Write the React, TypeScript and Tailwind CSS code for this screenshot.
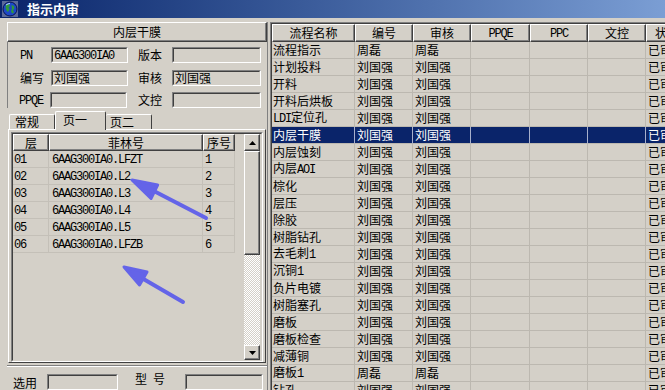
import React from "react";

const raised =
  "border border-t-white border-l-white border-r-[#404040] border-b-[#404040] shadow-[inset_-1px_-1px_0_#808080]";

function Txt({ s }: { s: string }) {
  const parts = s.match(/[\x20-\x7e]+|[^\x20-\x7e]+/g) || [];
  return (
    <span className="whitespace-pre">
      {parts.map((p, i) =>
        /^[\x20-\x7e]+$/.test(p) ? (
          <span key={i} className="font-['Liberation_Mono',monospace] text-[12px] tracking-[-1.2px]">
            {p}
          </span>
        ) : (
          <span key={i}>{p}</span>
        )
      )}
    </span>
  );
}

function Field({ w, value }: { w: string; value?: string }) {
  return (
    <div className={`${w} h-[16px] border border-t-[#808080] border-l-[#808080] border-r-white border-b-white`}>
      <div className="h-full border border-t-[#404040] border-l-[#404040] border-r-[#d4d0c8] border-b-[#d4d0c8] pl-[1px] flex items-center leading-[14px] whitespace-nowrap">
        {value && <Txt s={value} />}
      </div>
    </div>
  );
}

function Globe() {
  return (
    <svg width="16" height="16" viewBox="0 0 16 16">
      <rect x="0" y="0" width="16" height="16" fill="#5a6a9a" />
      <circle cx="8" cy="8" r="7" fill="#1d48c8" stroke="#0a1650" strokeWidth="1" />
      <path d="M4 3.5 L7 3 L8 5 L6.5 6.5 L7.5 8.5 L6 11 L4.5 9.5 L3.5 6.5 Z" fill="#2f9a3a" />
      <path d="M9.5 4 L12 5 L12.5 7.5 L11 9 L12 11.5 L10 12.5 L9 10 L10 8 Z" fill="#2f9a3a" />
      <path d="M4 4 Q6 2.5 8 2.5" stroke="#b8d4ff" strokeWidth="1" fill="none" />
    </svg>
  );
}

const leftRows = [
  ["01", "6AAG300IA0.LFZT", "1"],
  ["02", "6AAG300IA0.L2", "2"],
  ["03", "6AAG300IA0.L3", "3"],
  ["04", "6AAG300IA0.L4", "4"],
  ["05", "6AAG300IA0.L5", "5"],
  ["06", "6AAG300IA0.LFZB", "6"],
];

const steps = [
  "流程指示", "计划投料", "开料", "开料后烘板", "LDI定位孔", "内层干膜", "内层蚀刻",
  "内层AOI", "棕化", "层压", "除胶", "树脂钻孔", "去毛刺1", "沉铜1", "负片电镀",
  "树脂塞孔", "磨板", "磨板检查", "减薄铜", "磨板1", "钻孔",
];

const cols = [
  { t: "流程名称", w: "w-[83px]" },
  { t: "编号", w: "w-[58px]" },
  { t: "审核", w: "w-[58px]" },
  { t: "PPQE", w: "w-[59px]" },
  { t: "PPC", w: "w-[58px]" },
  { t: "文控", w: "w-[58px]" },
  { t: "状态", w: "w-[42px]" },
];

function LeftPanel() {
  return (
    <div className="w-[267px] pl-[7px] flex flex-col shrink-0">
      <div className={`h-[21px] ${raised} flex items-center justify-center`}>内层干膜</div>

      <div className="h-[71px] border-l border-l-[#808080] pl-[12px] pt-[5px] flex flex-col gap-[6px]">
        <div className="flex items-center h-[16px]">
          <span className="w-[31px]"><Txt s="PN" /></span>
          <Field w="w-[77px]" value="6AAG300IA0" />
          <span className="w-[34px] ml-[10px]">版本</span>
          <Field w="w-[89px]" />
        </div>
        <div className="flex items-center h-[16px] mt-[1px]">
          <span className="w-[31px]">编写</span>
          <Field w="w-[77px]" value="刘国强" />
          <span className="w-[34px] ml-[10px]">审核</span>
          <Field w="w-[89px]" value="刘国强" />
        </div>
        <div className="flex items-center h-[16px]">
          <span className="w-[31px] -ml-[1px]"><Txt s="PPQE" /></span>
          <Field w="w-[77px]" />
          <span className="w-[34px] ml-[11px]">文控</span>
          <Field w="w-[89px]" />
        </div>
      </div>

      <div className="relative z-10 h-[24px] -mb-[1px] flex items-end pl-[2px]">
        <div className="w-[46px] h-[15px] mb-[1px] border-t border-l border-r border-t-white border-l-white border-r-[#404040] rounded-t-[2px] pl-[5px] leading-[14px]">
          常规
        </div>
        <div className="w-[51px] h-[19px] bg-[#d4d0c8] border-t border-l border-r border-t-white border-l-white border-r-[#404040] rounded-t-[2px] pl-[7px] leading-[15px]">
          页一
        </div>
        <div className="w-[46px] h-[15px] mb-[1px] border-t border-r border-t-white border-r-[#404040] rounded-t-[2px] pl-[4px] leading-[14px]">
          页二
        </div>
      </div>

      <div className="h-[235px] ml-[1px] mr-[1px] border border-t-white border-l-white border-r-[#404040] border-b-[#404040] pt-[2px] pl-[2px] pr-[2px]">
        <div className="h-[230px] border border-t-[#808080] border-l-[#808080] border-r-white border-b-white">
          <div className="h-full border border-t-[#404040] border-l-[#404040] border-r-[#d4d0c8] border-b-[#d4d0c8] flex">
            <div className="w-[231px]">
              <div className="flex h-[17px]">
                <div className={`w-[36px] ${raised} flex items-center justify-center`}>层</div>
                <div className={`w-[154px] ${raised} flex items-center justify-center`}>菲林号</div>
                <div className={`w-[32px] ${raised} flex items-center justify-center`}>序号</div>
              </div>
              {leftRows.map((r) => (
                <div key={r[0]} className="flex h-[17px]">
                  <div className="w-[36px] border-r border-b border-[#c4c0b8] pl-[1px] flex items-center"><Txt s={r[0]} /></div>
                  <div className="w-[154px] border-r border-b border-[#c4c0b8] pl-[3px] flex items-center"><Txt s={r[1]} /></div>
                  <div className="w-[32px] border-r border-b border-[#c4c0b8] pl-[2px] flex items-center"><Txt s={r[2]} /></div>
                </div>
              ))}
            </div>
            <div className="w-[16px] flex flex-col">
              <div className={`h-[17px] ${raised} flex items-center justify-center`}>
                <svg width="7" height="4" viewBox="0 0 7 4"><path d="M3.5 0 L7 4 L0 4 Z" fill="#000" /></svg>
              </div>
              <div className={`h-[104px] ${raised}`} />
              <div className="flex-1 bg-[repeating-conic-gradient(#ffffff_0%_25%,#d4d0c8_0%_50%)] bg-size-[2px_2px]" />
              <div className={`h-[15px] ${raised} flex items-center justify-center`}>
                <svg width="7" height="4" viewBox="0 0 7 4"><path d="M0 0 L7 0 L3.5 4 Z" fill="#000" /></svg>
              </div>
            </div>
          </div>
        </div>
      </div>

      <div className="flex-1 mt-[2px] border-t border-t-[#808080] shadow-[inset_0_1px_0_#ffffff] flex items-start pt-[8px] pl-[6px]">
        <span className="w-[34px] mt-[2px]">选用</span>
        <Field w="w-[71px]" />
        <span className="w-[50px] ml-[17px] mt-[-2px]"><Txt s="型 号" /></span>
        <Field w="w-[78px]" />
      </div>
    </div>
  );
}

function RightGrid() {
  return (
    <div className="flex-1 min-w-0 border-t border-l border-t-[#808080] border-l-[#808080] overflow-hidden">
      <div className="h-full border-t border-l border-t-[#404040] border-l-[#404040] overflow-hidden">
        <div className="flex h-[18px] w-max">
          {cols.map((c) => (
            <div key={c.t} className={`${c.w} shrink-0 ${raised} flex items-center justify-center`}>
              <Txt s={c.t} />
            </div>
          ))}
        </div>
        {steps.map((s, i) => {
          const sel = i === 5;
          const who = s === "流程指示" || s === "磨板1" ? "周磊" : "刘国强";
          const vals = [s, who, who, "", "", "", "已审核"];
          return (
            <div key={s} className={`flex h-[17px] w-max ${sel ? "bg-[#0a246a] text-white" : ""}`}>
              {cols.map((c, j) => (
                <div
                  key={j}
                  className={`${c.w} shrink-0 border-r border-b ${sel ? "border-r-[#a8b0cc] border-b-[#bcb8b0]" : "border-[#bcb8b0]"} ${j === 0 ? "pl-[1px]" : "pl-[2px]"} flex items-center whitespace-nowrap overflow-hidden`}
                >
                  <Txt s={vals[j]} />
                </div>
              ))}
            </div>
          );
        })}
      </div>
    </div>
  );
}

function Arrows() {
  return (
    <svg className="absolute left-0 top-0 pointer-events-none" width="665" height="390" viewBox="0 0 665 390">
      <g fill="#6464e8" stroke="#6464e8" strokeLinejoin="round" strokeLinecap="round">
        <line x1="150" y1="189" x2="206" y2="218" strokeWidth="4" />
        <path d="M132 180 L157.6 185 L151 198.5 Z" strokeWidth="3" />
        <line x1="140" y1="277" x2="183" y2="302" strokeWidth="4" />
        <path d="M124 267 L147 272 L139.5 285 Z" strokeWidth="3" />
      </g>
    </svg>
  );
}

export default function App() {
  return (
    <div className="relative w-[665px] h-[390px] overflow-hidden bg-[#d4d0c8] text-black text-[12px] leading-[14px] font-['Noto_Sans_CJK_SC',sans-serif] flex flex-col">
      <div className="h-[18px] shrink-0 bg-linear-to-r from-[#0a246a] to-[#7b9ed4] flex items-center pl-[2px]">
        <Globe />
        <span className="ml-[9px] text-white font-bold text-[13px]">指示内审</span>
      </div>
      <div className="flex flex-1 min-h-0 pt-[4px]">
        <LeftPanel />
        <div className="w-[3px] shrink-0 border-l border-l-[#808080]" />
        <RightGrid />
      </div>
      <Arrows />
    </div>
  );
}
